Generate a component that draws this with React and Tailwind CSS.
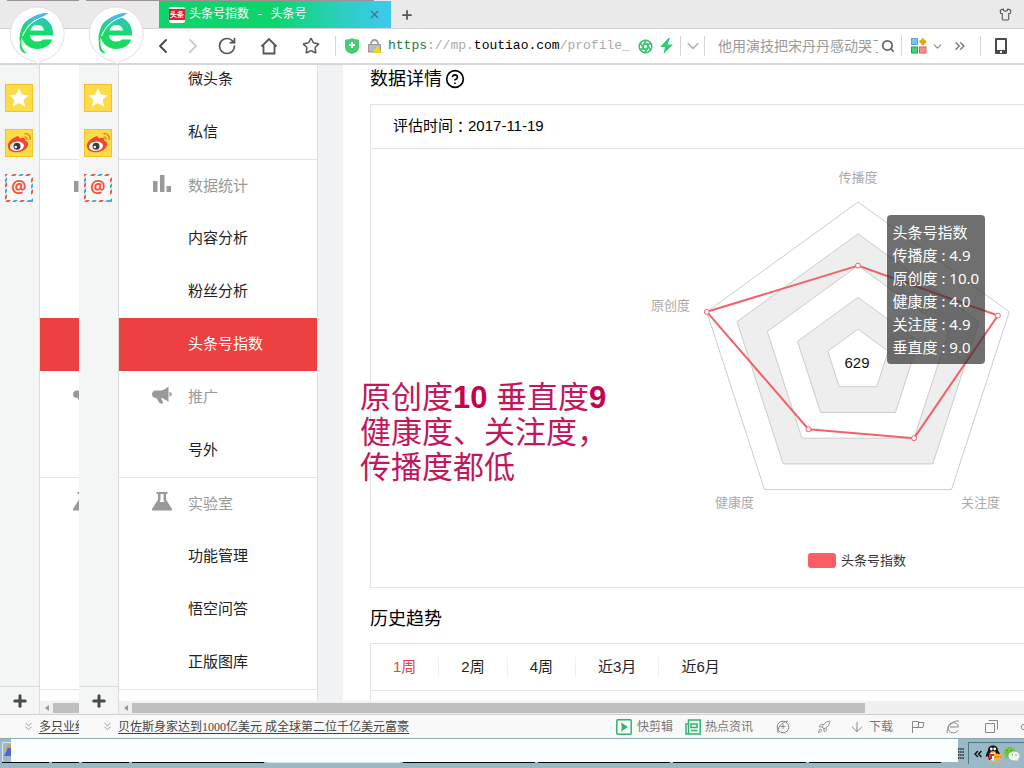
import React, { useState } from 'react';
import { ChevronLeft, ChevronRight, ChevronDown, ChevronsDown, ChevronsRight, ChevronsLeft, RotateCw, Star, Aperture, Search, Shirt, Plus, X, ArrowDown, CircleHelp, Rocket } from 'lucide-react';

const menu = [
  { title: '', items: ['微头条', '私信'] },
  { title: '数据统计', icon: 'bars', line: true, items: ['内容分析', '粉丝分析', '头条号指数'] },
  { title: '推广', icon: 'horn', items: ['号外'] },
  { title: '实验室', icon: 'flask', line: true, items: ['功能管理', '悟空问答', '正版图库'] },
];

const periods = ['1周', '2周', '4周', '近3月', '近6月'];

const scores = [
  ['传播度', '4.9'],
  ['原创度', '10.0'],
  ['健康度', '4.0'],
  ['关注度', '4.9'],
  ['垂直度', '9.0'],
];

// radar geometry, vertices go anticlockwise from the top
const CX = 207;
const CY = 212;
const R = 159;
const series = [0.6, 1, 0.53, 0.6, 0.925];

function vertex(i, ratio) {
  const angle = -Math.PI / 2 - (i * 2 * Math.PI) / 5;
  return [CX + R * ratio * Math.cos(angle), CY + R * ratio * Math.sin(angle)];
}

function ring(ratio) {
  return [0, 1, 2, 3, 4].map((i) => vertex(i, ratio).join(',')).join(' ');
}

function BrowserLogo({ id }) {
  return (
    <svg className="absolute left-[9px] top-[6px] z-10" width="56" height="60" viewBox="0 0 56 60" aria-hidden="true">
      <path d="M28 1a27 27 0 0 1 9 52.5c-4 1.4-6 2-8 5-2-3-5-3.600-8-4.500A27 27 0 0 1 28 1z" fill="#fff" stroke="#ecdcdc" />
      <defs>
        <linearGradient id={id} gradientUnits="userSpaceOnUse" x1="24" y1="44" x2="30" y2="8">
          <stop offset="0.4" stopColor="#16dc62" />
          <stop offset="0.75" stopColor="#22cf9c" />
          <stop offset="1" stopColor="#3cb4ea" />
        </linearGradient>
      </defs>
      <path
        d="M44 29.500C45 18.500 38 11 28.500 11 19 11 12 18 12 27S19 43 28.500 43c7 0 12.500-3.500 14.800-9.500H34c-1.300 1.300-3 2-5.500 2-4 0-7-2-7.500-6zM21.300 24.500c1-3.700 3.200-5.500 7-5.500s6.200 1.800 6.700 5.500z"
        fill={`url(#${id})`}
      />
      <path d="M39.500 7C27 9.500 19 16.500 14.500 26 11 35 11.500 43.500 18 47 12.500 48 10 43 11 35 10 35 10.500 26 13 22 18 13 28 6.500 39.500 7z" fill={`url(#${id})`} />
      <path d="M39 9.500C27 12 18 19 13.500 30" fill="none" stroke="#fff" strokeWidth="1.200" />
      <path d="M39.500 7c-8 0-16 4-21 10 6-3 12-5 14-6 3-1.200 5-2 7-4z" fill="#4cb8e8" />
    </svg>
  );
}

function WeiboIcon() {
  return (
    <svg width="28" height="28" viewBox="0 0 28 28" aria-hidden="true">
      <rect x="0.5" y="0.5" width="27" height="27" fill="#ffdb45" stroke="#f3c02e" />
      <path d="M10.500 8c2-1.200 4-.9 4.200 1.500 2.800-1.200 6.300-1 5.600 2.300 2.500.8 3.500 2.700 2.500 5.200-1.500 4-6.500 6.300-11.500 6.300s-8.500-2.500-8.500-6.300C2.800 13 6.500 10 10.500 8z" fill="#f04a2c" />
      <ellipse cx="12" cy="17.200" rx="7" ry="4.600" fill="#fff" transform="rotate(-6 12 17.200)" />
      <circle cx="12" cy="17.300" r="3.500" fill="#3a3a3a" />
      <circle cx="10.800" cy="18" r="1.200" fill="#fff" />
      <path d="M19.500 8.300c1.700-.3 2.800.8 2.400 2.500M19.500 4.800c3.800-.8 6.500 2.200 5.600 6" fill="none" stroke="#ec7a2c" strokeWidth="1.400" />
    </svg>
  );
}

function MailIcon() {
  return (
    <svg width="28" height="28" viewBox="0 0 28 28" aria-hidden="true">
      <rect width="28" height="28" fill="#f9f9f9" />
      <g fill="#e0604c">
        <path d="M0 0h3L0 3zM8 0h4l-2 2H6zM22 0h4l-2 2h-4zM2 26h4l-2 2H0zM16 26h4l-2 2h-4zM0 10l2-2v4l-2 2zM0 22l2-2v4l-2 2zM26 5l2-2v4l-2 2zM26 17l2-2v4l-2 2z" />
      </g>
      <g fill="#4aa8dc">
        <path d="M15 0h4l-2 2h-4zM9 26h4l-2 2H7zM23 26h3l2-2v4h-7zM0 5l2-2v4l-2 2zM0 16l2-2v4l-2 2zM26 11l2-2v4l-2 2z" />
      </g>
      <text x="14" y="19" textAnchor="middle" fontFamily="Noto Sans, sans-serif" fontSize="17" fontWeight="bold" fill="#f0563c">@</text>
    </svg>
  );
}

function MenuIcon({ name }) {
  return (
    <svg className="-mt-1 shrink-0" width="20" height="20" viewBox="0 0 20 20" fill="#999" aria-hidden="true">
      {name === 'bars' && <path d="M1 7h4.500v11H1zM8 1h4.500v17H8zM14.500 12H19v6h-4.500z" />}
      {name === 'horn' && (
        <path d="M4 4.500h4C12 4.500 14.500 2 16.500.5v15.500C14.500 14.500 12 12.500 9 11.700l2 4.500c.2 1-.2 1.300-1 1.300H8.500c-.8 0-1-.4-1.500-1.200l-2.500-4.300C1.500 12 0 10.500 0 8.200S1.500 4.500 4 4.500zM17.500 6c3 0 3 4.500 0 4.500z" />
      )}
      {name === 'flask' && (
        <path fillRule="evenodd" d="M4.500 0h11v2H14v5.500l6 9.500c.5 1 0 1.500-1 1.500H1c-1 0-1.500-.5-1-1.500l6-9.500V2H4.500zM8.500 2v6l-1 2h5l-1-2V2z" />
      )}
    </svg>
  );
}

function Rail() {
  return (
    <nav className="flex w-10 shrink-0 flex-col border-r border-[#dcdcdc] bg-[#f4f5f5]">
      <div className="flex flex-1 flex-col items-start gap-[17px] pl-[5px] pt-[19px]">
        <button type="button" aria-label="收藏">
          <svg width="28" height="28" viewBox="0 0 28 28" aria-hidden="true">
            <rect x="0.5" y="0.5" width="27" height="27" fill="#ffdb45" stroke="#f3c02e" />
            <path d="M14 4l2.800 6.600 7 .6-5.300 4.600 1.700 7L14 19l-6.200 3.800 1.700-7-5.300-4.600 7-.6z" fill="#fff" />
          </svg>
        </button>
        <button type="button" aria-label="微博"><WeiboIcon /></button>
        <button type="button" aria-label="邮箱"><MailIcon /></button>
      </div>
      <button type="button" aria-label="添加" className="flex h-7 items-center justify-center border-t border-[#dcdcdc]">
        <Plus size={18} strokeWidth={4} color="#4a4a4a" />
      </button>
    </nav>
  );
}

// without labels only the icons and row backgrounds are drawn
function Sidebar({ labels }) {
  return (
    <aside className="w-[199px] shrink-0 overflow-hidden border-r border-[#e2e2e2] bg-white text-[15px] text-[#222]">
      <div className="-mt-3">
        {menu.map((group, i) => (
          <div key={i}>
            {group.title && (
              <div className={`flex h-[53px] items-center gap-4 pl-[33px] text-[#999] ${group.line ? 'border-t border-[#e4e4e4]' : ''}`}>
                <MenuIcon name={group.icon} />
                {labels && <span>{group.title}</span>}
              </div>
            )}
            {group.items.map((item) => (
              <a
                key={item}
                href="#"
                aria-label={item}
                className={`flex h-[53px] items-center pl-[69px] ${item === '头条号指数' ? 'bg-[#ed4040] text-white' : ''}`}
              >
                {labels && item}
              </a>
            ))}
          </div>
        ))}
        <div className="h-6 border-t border-[#e4e4e4]"></div>
      </div>
    </aside>
  );
}

function ScrollBar() {
  return (
    <div className="flex h-[13px] shrink-0 items-center bg-[#f0f0f0]">
      <span className="ml-[5px] h-0 w-0 border-y-[3px] border-r-[4px] border-y-transparent border-r-[#999]"></span>
      <span className="ml-1 h-[10px] w-[81%] min-w-[66px] bg-[#bfbfbf]"></span>
    </div>
  );
}

function RadarChart() {
  return (
    <div className="relative h-[438px] w-[414px]">
      <svg width="414" height="438" viewBox="0 0 414 438" fontFamily="Noto Sans CJK SC, sans-serif" fontSize="13">
        {[1, 0.8, 0.6, 0.4, 0.2].map((ratio, i) => (
          <polygon key={ratio} points={ring(ratio)} fill={i % 2 ? '#eee' : '#fff'} stroke="#ccc" />
        ))}
        <polygon points={series.map((v, i) => vertex(i, v).join(',')).join(' ')} fill="none" stroke="#f2606b" strokeWidth="2" />
        {series.map((v, i) => {
          const [x, y] = vertex(i, v);
          return <circle key={i} cx={x} cy={y} r="2.500" fill="#fff" stroke="#f2606b" />;
        })}
        <g fill="#aaa">
          <text x="207" y="33" textAnchor="middle">传播度</text>
          <text x="39" y="161" textAnchor="end">原创度</text>
          <text x="103" y="358" textAnchor="end">健康度</text>
          <text x="310" y="358">关注度</text>
        </g>
        <text x="206" y="219" textAnchor="middle" fontFamily="Liberation Sans, sans-serif" fontSize="15" fill="#111">629</text>
        <rect x="157" y="404" width="28" height="15" rx="3" fill="#fd5e66" />
        <text x="190" y="416" fill="#333">头条号指数</text>
      </svg>
      <div className="absolute left-[236px] top-[66px] rounded bg-[#323232]/70 px-[6px] pt-[6px] pb-[5px] font-['Noto_Sans','Noto_Sans_CJK_SC',sans-serif] text-[15px] leading-[23px] whitespace-nowrap text-white">
        <div>头条号指数</div>
        {scores.map(([name, value]) => (
          <div key={name}>{name} : {value}</div>
        ))}
      </div>
    </div>
  );
}

function Content() {
  const [period, setPeriod] = useState('1周');

  return (
    <main className="relative ml-[25px] min-w-0 flex-1 overflow-hidden bg-white pl-[27px] text-[15px] text-black">
      <div className="min-w-[975px]">
        <h2 className="mb-[11px] flex h-7 items-center gap-[3px] text-lg">
          数据详情
          <CircleHelp size={20} strokeWidth={2} />
        </h2>
        <section className="border border-[#e4e4e4]">
          <div className="flex h-11 items-center border-b border-[#e4e4e4] px-[22px]">
            评估时间<span className="font-['Noto_Sans_CJK_TC',sans-serif]">：</span>2017-11-19
          </div>
          <div className="flex justify-center">
            <RadarChart />
          </div>
        </section>
        <h2 className="mt-[17px] mb-[10px] flex h-7 items-center text-lg">历史趋势</h2>
        <section className="border border-[#e4e4e4]">
          <div className="flex h-[47px] items-center border-b border-[#e4e4e4]">
            {periods.map((p) => (
              <button
                key={p}
                type="button"
                onClick={() => setPeriod(p)}
                className={`h-5 border-r border-[#f0f0f0] px-[22px] leading-5 last:border-r-0 ${p === period ? 'text-[#ed4040]' : 'text-[#222]'}`}
              >
                {p}
              </button>
            ))}
          </div>
          <div className="h-40"></div>
        </section>
      </div>
      <p className="absolute left-[17px] top-[315px] text-[31px] leading-[35px] text-[#c2185b]">
        原创度<b className="text-[#c9004f]">10</b> 垂直度<b className="text-[#c9004f]">9</b>
        <br />
        健康度、关注度，
        <br />
        传播度都低
      </p>
    </main>
  );
}

function Toolbar() {
  return (
    <div className="flex flex-1 items-center pl-[69px]">
      <button type="button" aria-label="后退" className="flex w-[30px] justify-center"><ChevronLeft size={24} strokeWidth={1.8} color="#444" /></button>
      <button type="button" aria-label="前进" className="mr-1 flex w-[30px] justify-center"><ChevronRight size={24} strokeWidth={1.8} color="#ccc" /></button>
      <button type="button" aria-label="刷新" className="mr-[6px] flex w-[30px] justify-center"><RotateCw size={20} color="#555" /></button>
      <button type="button" aria-label="主页" className="flex w-[42px] justify-center">
        <svg width="18" height="18" viewBox="0 0 18 18" fill="none" stroke="#555" strokeWidth="1.800" aria-hidden="true">
          <path d="M1.500 9.500L9 2l7.500 7.500M3.500 8.500v8h11v-8" />
        </svg>
      </button>
      <button type="button" aria-label="收藏" className="flex w-[42px] justify-center"><Star size={18} color="#555" /></button>
      <span className="ml-[3px] h-5 w-px bg-[#d6d6d6]"></span>
      <svg className="ml-[9px] shrink-0" width="14" height="16" viewBox="0 0 14 16" aria-hidden="true">
        <path d="M0 1.500C3 1.500 5 1 7 0c2 1 4 1.500 7 1.500V9c0 4-3 6-7 7-4-1-7-3-7-7z" fill="#46cc76" />
        <path d="M7 4v6M4 7h6" stroke="#fff" strokeWidth="2" />
      </svg>
      <svg className="ml-[9px] shrink-0" width="14" height="14" viewBox="0 0 14 14" aria-hidden="true">
        <path d="M3 6V4.500a3.500 3.500 0 0 1 7 0V6" fill="none" stroke="#999" strokeWidth="1.800" />
        <rect x="0.5" y="5.500" width="12" height="7.500" fill="#bbb" stroke="#999" />
        <path d="M9.500 6.500L14 14H5z" fill="#f2d91c" />
      </svg>
      <div className="ml-[6px] min-w-0 flex-1 overflow-hidden font-['Liberation_Mono',monospace] text-[13px] whitespace-nowrap text-[#aaa]">
        <span className="text-[#1d7a48]">https</span>://mp.<span className="text-black">toutiao.com</span>/profile_
      </div>
      <Aperture className="ml-1 shrink-0" size={15} color="#35c06e" strokeWidth={2.5} />
      <svg className="ml-[7px] shrink-0" width="13" height="16" viewBox="0 0 13 16" aria-hidden="true">
        <path d="M8.500 0L0 9h5L3.500 16 13 6.500H7.500L10 0z" fill="#35c875" />
      </svg>
      <span className="ml-[7px] h-5 w-px bg-[#d6d6d6]"></span>
      <button type="button" aria-label="展开地址" className="flex w-[23px] justify-center"><ChevronDown size={20} strokeWidth={1.5} color="#aaa" /></button>
      <span className="h-5 w-px bg-[#d6d6d6]"></span>
      <input
        type="text"
        aria-label="搜索"
        placeholder="他用演技把宋丹丹感动哭了"
        className="ml-[13px] h-6 w-[160px] text-sm outline-none placeholder:text-[#999]"
      />
      <button type="button" aria-label="搜索" className="ml-[3px]"><Search size={14} strokeWidth={3} color="#666" /></button>
      <span className="ml-[6px] h-5 w-px bg-[#d6d6d6]"></span>
      <svg className="ml-[9px] shrink-0" width="16" height="16" viewBox="0 0 16 16" aria-hidden="true">
        <rect x="0.5" y="0.5" width="6" height="6" fill="#7cc4f2" stroke="#55a8e0" />
        <path d="M11.800.5v6.600M8.500 3.800h6.600" stroke="#e8a010" strokeWidth="3" />
        <rect x="0.5" y="9" width="6" height="6" fill="#3ed27c" stroke="#1ba552" />
        <rect x="8.500" y="9" width="6.500" height="6" fill="#f79088" stroke="#e06058" />
      </svg>
      <ChevronDown className="ml-1 shrink-0" size={13} color="#888" />
      <ChevronsRight className="ml-2 shrink-0" size={16} color="#777" />
      <span className="ml-[12px] h-5 w-px bg-[#d6d6d6]"></span>
      <svg className="ml-[14px] mr-[17px] shrink-0" width="12" height="16" viewBox="0 0 12 16" aria-hidden="true">
        <path fillRule="evenodd" d="M1 0h10q1 0 1 1v14q0 1-1 1H1q-1 0-1-1V1q0-1 1-1zM2 2v10h8V2zM5 13v2h2v-2z" fill="#4a4a4a" />
      </svg>
    </div>
  );
}

function StatusTools() {
  return (
    <div className="ml-auto flex shrink-0 items-center text-[#777]">
      <svg width="16" height="16" viewBox="0 0 16 16" aria-hidden="true">
        <rect x="0.8" y="0.8" width="14.400" height="14.400" rx="1" fill="none" stroke="#2fb56b" strokeWidth="1.500" />
        <path d="M5 3.500L12 8l-7 4.500.8-4z" fill="#2fb56b" />
      </svg>
      <span className="ml-[5px] w-12">快剪辑</span>
      <svg width="16" height="16" viewBox="0 0 16 16" fill="none" stroke="#2fb56b" strokeWidth="1.500" aria-hidden="true">
        <path d="M3.500 1h11.700v14H1V5h2.500zM3.500 5v10M6 5h6v3.500H6zM6 11.500h6.500" />
      </svg>
      <span className="ml-1 w-[71px]">热点资讯</span>
      <svg width="14" height="14" viewBox="0 0 14 14" fill="none" stroke="#888" aria-hidden="true">
        <circle cx="7" cy="7" r="5.800" />
        <path d="M2 13C1 9 5 2 12 1M7 4v5M4.500 6.500h5" />
      </svg>
      <Rocket className="ml-[27px]" size={14} strokeWidth={1.5} color="#888" />
      <ArrowDown className="ml-[18px]" size={16} strokeWidth={1.5} color="#888" />
      <span className="ml-[4px] w-[42px]">下载</span>
      <svg width="14" height="13" viewBox="0 0 14 13" fill="none" stroke="#888" aria-hidden="true">
        <path d="M1.500 13V1.500h6v6h-6M7.500 2.500H13L12 7.500H7.500" />
      </svg>
      <svg className="ml-[21px]" width="14" height="14" viewBox="0 0 14 14" fill="none" stroke="#888" aria-hidden="true">
        <path d="M12.500 10C9 15 2 13 2 7.500 2 2 11.500.5 12.500 7H4M13 1C7 0 1 6 1 13" />
      </svg>
      <svg className="ml-[25px]" width="13" height="13" viewBox="0 0 13 13" fill="none" stroke="#888" aria-hidden="true">
        <path d="M.5 3.500h9v9h-9zM3.500.5h9v9" />
      </svg>
      <svg className="ml-[22px]" width="4" height="12" viewBox="0 0 4 12" fill="none" stroke="#888" aria-hidden="true">
        <path d="M4 3.500H2.500L1 6l1.500 2.500H4" />
      </svg>
    </div>
  );
}

function Browser({ id, full, news }) {
  return (
    <div className={`relative flex flex-col overflow-hidden ${full ? 'min-w-0 flex-1' : 'w-[79px] shrink-0'}`}>
      <BrowserLogo id={id} />
      <header className="flex h-[65px] shrink-0 flex-col">
        <div className="h-[29px] shrink-0 border-b border-[#d2d2d2] bg-[#eaeaea]">
          <div className="ml-[7px] h-px w-[288px] bg-[#9c9494]"></div>
          {full && (
            <div className="flex h-[27px] items-center pl-20">
              <div className="flex h-full w-[232px] items-center bg-linear-to-r from-[#0fd46c] from-50% to-[#40c8f2] pl-[10px] pr-[10px] font-['Liberation_Mono','Noto_Sans_CJK_SC',monospace] text-xs text-white">
                <span className="mr-1 flex h-4 w-4 items-center rounded-[2px] bg-white">
                  <span className="h-[11px] w-4 bg-[#e0202c] text-center font-['Noto_Sans_CJK_SC',sans-serif] text-[7px] leading-[11px] font-bold">头条</span>
                </span>
                头条号指数 - 头条号
                <button type="button" aria-label="关闭标签" className="ml-auto"><X size={13} color="#4a7088" /></button>
              </div>
              <button type="button" aria-label="新标签" className="ml-[9px]"><Plus size={14} strokeWidth={3} color="#555" /></button>
              <button type="button" aria-label="皮肤" className="ml-auto mr-3"><Shirt size={13} color="#555" /></button>
            </div>
          )}
        </div>
        <div className="flex h-9 border-b-2 border-[#d6d6d6] bg-white">{full && <Toolbar />}</div>
      </header>
      <div className="flex min-h-0 flex-1">
        <Rail />
        <div className="flex min-w-0 flex-1 flex-col bg-[#f1f2f4]">
          <div className="flex min-h-0 flex-1">
            <Sidebar labels={full} />
            {full && <Content />}
          </div>
          <ScrollBar />
        </div>
      </div>
      <footer className="flex h-6 shrink-0 items-center border-t border-[#cfcfcf] bg-[#f9f9f9] pl-[22px] text-xs whitespace-nowrap">
        <ChevronsDown className="mr-1 shrink-0" size={13} strokeWidth={1.5} color="#888" />
        <a href="#" className="font-['Liberation_Serif','Noto_Sans_CJK_SC',serif] text-[#444] underline underline-offset-2">{news}</a>
        {full && <StatusTools />}
      </footer>
    </div>
  );
}

function Taskbar() {
  return (
    <div className="flex h-[30px] shrink-0 border-t border-[#8fa8b8] bg-[#9ab8c6]">
      <div className="flex min-w-0 flex-1 flex-col">
        <div className="flex h-[23px]">
          <svg width="11" height="23" viewBox="0 0 11 23" aria-hidden="true">
            <path d="M2.500 23V3.500H11" fill="none" stroke="#d8e6ec" />
            <path d="M6 9q2-4 5-3v5H5z" fill="#f09030" />
            <path d="M4 17l4-8h3v8z" fill="#4a68d0" />
          </svg>
          <div className="flex-1 bg-[#fbfefe]"></div>
        </div>
        <div className="flex h-px gap-[3px] pl-[2px] pr-[17px]">
          <span className="w-[47px] bg-black"></span>
          <span className="w-[27px] bg-black"></span>
          <span className="w-[47px] bg-black"></span>
          <span className="flex-1 bg-black"></span>
          <span className="flex-1 bg-[#d8e6ec]"></span>
          <span className="flex-1 bg-black"></span>
          <span className="flex-1 bg-black"></span>
          <span className="flex-1 bg-black"></span>
          <span className="flex-1 bg-black"></span>
        </div>
      </div>
      <svg className="mt-2 shrink-0" width="6" height="14" viewBox="0 0 6 14" aria-hidden="true">
        <path d="M0 2h6M0 5h6M0 8h6M0 11h6" stroke="#222" strokeWidth="1.500" strokeDasharray="1.500 .7" />
      </svg>
      <div className="ml-1 mt-[3px] mb-1 flex w-14 items-center overflow-hidden border-t border-l border-[#4f7888] pl-[3px]">
        <ChevronsLeft className="shrink-0" size={12} strokeWidth={3} color="#111" />
        <svg className="ml-[1px] shrink-0" width="18" height="18" viewBox="0 0 18 18" aria-hidden="true">
          <path d="M3 5.500C3 2 5 .5 8 .5s5 1.500 5 5c2 3 2.500 5 2 6.500l-2-1-1 4H4l-1-4-2 1C.5 10 1.500 8 3 5.500z" fill="#111" />
          <ellipse cx="8" cy="11" rx="3.800" ry="4.500" fill="#fff" />
          <circle cx="6.300" cy="4" r="1.400" fill="#fff" />
          <circle cx="9.700" cy="4" r="1.400" fill="#fff" />
          <path d="M5 6.500h6L8 8zM2 16h12v1.500H2z" fill="#f8b020" />
          <path d="M3 7.500q5 3 10 0v2q-3 1.500-6 1.500v3H4.500v-4z" fill="#e02020" />
          <path d="M9 9h8v6h-5l-2 2v-2H9z" fill="#fbb32c" />
          <path d="M10.500 12h1M12.600 12h1M14.700 12h1" stroke="#704000" strokeWidth="1.200" />
        </svg>
        <svg className="shrink-0" width="17" height="16" viewBox="0 0 17 16" aria-hidden="true">
          <path d="M6.500 1C10 1 12.500 3 12.500 6s-2.500 5.500-6 5.500L2 13l.7-3C-1 6 2 1 6.500 1z" fill="#6cc83c" />
          <path d="M11 5.500c3 0 5.500 2 5.500 4.500 0 1.500-.7 2.500-1.700 3.300L15 15l-2-.8C9 15 5.500 13 5.500 10S8 5.500 11 5.500z" fill="#f0f5f0" />
          <path d="M4 4.500h1M8 4.500h1M9 9h1M12.500 9h1" stroke="#3a7020" />
        </svg>
      </div>
    </div>
  );
}

function App() {
  return (
    <div className="flex h-screen flex-col overflow-hidden bg-white font-['Liberation_Sans','Noto_Sans_CJK_SC',sans-serif]">
      <div className="flex min-h-0 flex-1">
        <Browser id="logoLeft" news="多只业绩" />
        <Browser id="logoMain" full news="贝佐斯身家达到1000亿美元 成全球第二位千亿美元富豪" />
      </div>
      <Taskbar />
    </div>
  );
}

export default App;
